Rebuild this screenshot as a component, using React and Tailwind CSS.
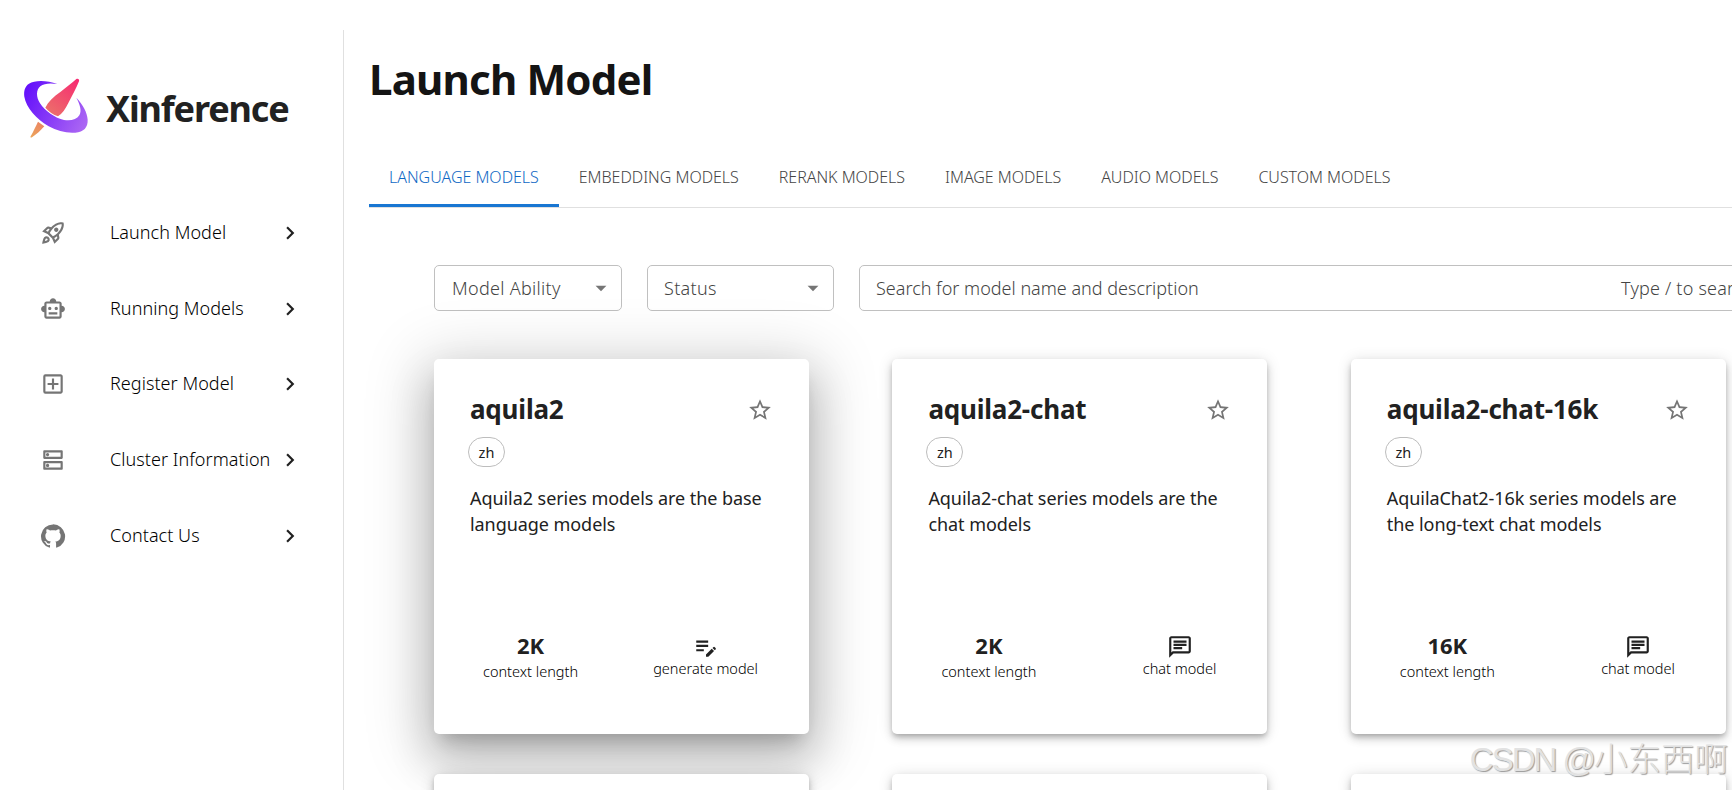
import {
  MdArrowDropDown,
  MdChevronRight,
  MdEditNote,
  MdOutlineAddBox,
  MdOutlineChat,
  MdOutlineDns,
  MdOutlineRocketLaunch,
  MdOutlineSmartToy,
  MdStarBorder,
} from "react-icons/md";

const GitHubIcon = ({ className }) => (
  <svg viewBox="0 0 24 24" fill="currentColor" className={className}>
    <path d="M12 1.27a11 11 0 00-3.48 21.46c.55.09.73-.28.73-.55v-1.84c-3.03.64-3.67-1.46-3.67-1.46-.55-1.29-1.28-1.65-1.28-1.65-.92-.65.1-.65.1-.65 1.1 0 1.73 1.1 1.73 1.1.92 1.65 2.57 1.2 3.21.92a2 2 0 01.64-1.47c-2.47-.27-5.04-1.19-5.04-5.5 0-1.1.46-2.1 1.2-2.84a3.76 3.76 0 010-2.93s.91-.28 3.11 1.1c1.8-.49 3.7-.49 5.5 0 2.1-1.38 3.02-1.1 3.02-1.1a3.76 3.76 0 01.1 2.93c.83.74 1.2 1.74 1.2 2.94 0 4.21-2.57 5.13-5.04 5.4.45.37.82.92.82 2.02v3.03c0 .27.1.64.73.55A11 11 0 0012 1.27" />
  </svg>
);

const Logo = () => (
  <svg viewBox="0 0 228 228" className="h-[76px] w-[76px] shrink-0">
    <defs>
      <linearGradient id="ring" x1="20" y1="60" x2="215" y2="160" gradientUnits="userSpaceOnUse">
        <stop offset="0" stopColor="#6410fb" />
        <stop offset="1" stopColor="#ae6af3" />
      </linearGradient>
      <linearGradient id="rocket" x1="180" y1="28" x2="40" y2="202" gradientUnits="userSpaceOnUse">
        <stop offset="0" stopColor="#f72a72" />
        <stop offset="0.6" stopColor="#ec6f6a" />
        <stop offset="1" stopColor="#eba55a" />
      </linearGradient>
    </defs>
    <path
      fill="url(#ring)"
      d="M118 42C86 30 50 30 33 41C20 49 17 64 19 80C24 112 56 148 92 169C118 184 146 190 172 188C197 186 210 172 209 149C208 127 194 103 175 83C186 104 192 122 184 136C176 149 159 153 138 150C112 145 80 122 66 100C54 81 54 60 67 49C78 40 96 39 118 42Z"
    />
    <path
      fill="url(#rocket)"
      d="M82 113C90 96 106 80 128 65C146 52 162 38 175 27C180 24 185 28 183 34C175 54 162 78 151 99C142 117 133 131 120 139C106 134 92 125 82 113Z"
    />
    <path fill="url(#rocket)" d="M60 155L79 169C68 182 56 192 42 202C39 204 36 202 38 199C46 185 52 171 60 155Z" />
  </svg>
);

const menu = [
  { label: "Launch Model", Icon: MdOutlineRocketLaunch },
  { label: "Running Models", Icon: MdOutlineSmartToy },
  { label: "Register Model", Icon: MdOutlineAddBox },
  { label: "Cluster Information", Icon: MdOutlineDns },
  { label: "Contact Us", Icon: GitHubIcon },
];

const tabs = [
  "LANGUAGE MODELS",
  "EMBEDDING MODELS",
  "RERANK MODELS",
  "IMAGE MODELS",
  "AUDIO MODELS",
  "CUSTOM MODELS",
];

const models = [
  {
    name: "aquila2",
    lang: "zh",
    description: "Aquila2 series models are the base language models",
    context: "2K",
    ability: "generate model",
    Icon: MdEditNote,
    active: true,
  },
  {
    name: "aquila2-chat",
    lang: "zh",
    description: "Aquila2-chat series models are the chat models",
    context: "2K",
    ability: "chat model",
    Icon: MdOutlineChat,
  },
  {
    name: "aquila2-chat-16k",
    lang: "zh",
    description: "AquilaChat2-16k series models are the long-text chat models",
    context: "16K",
    ability: "chat model",
    Icon: MdOutlineChat,
  },
];

const cardShadow =
  "shadow-[0_3px_5px_-1px_rgba(0,0,0,0.2),0_5px_9px_rgba(0,0,0,0.14),0_1px_15px_rgba(0,0,0,0.12)]";
const activeShadow =
  "shadow-[0_12px_16px_-8px_rgba(0,0,0,0.2),0_26px_44px_4px_rgba(0,0,0,0.16),0_10px_60px_12px_rgba(0,0,0,0.17)]";

const ModelCard = ({ model }) => (
  <div
    className={`flex h-[375px] w-[375px] flex-col rounded-[5px] bg-white pt-[33px] pr-9 pl-9 ${
      model.active ? activeShadow : cardShadow
    }`}
  >
    <div className="flex h-[35px] items-center justify-between">
      <h2 className="text-[26px] font-bold tracking-[-0.2px]">{model.name}</h2>
      <MdStarBorder className="h-[26px] w-[26px] text-[#757575]" />
    </div>
    <span className="mt-[10px] -ml-[2px] flex h-[30px] w-[37px] items-center justify-center rounded-full border border-[#bdbdbd] text-[14.5px] leading-none">
      {model.lang}
    </span>
    <p className="mt-[18px] w-[304px] text-lg leading-[26px] tracking-[-0.06px]">{model.description}</p>
    <div className="mt-auto mb-[51px] flex justify-between pr-[15px] pl-[13px] text-[14.5px] font-light">
      <div className="-mt-px flex flex-col items-center">
        <span className="text-[22px] leading-[26px] font-bold">{model.context}</span>
        <span className="mt-px leading-6 text-black">context length</span>
      </div>
      <div className="flex flex-col items-center">
        <model.Icon className="mt-px h-[26px] w-[26px]" />
        <span className="-mt-px leading-[18px] text-black">{model.ability}</span>
      </div>
    </div>
  </div>
);

const Select = ({ label, className }) => (
  <div
    className={`flex h-[46px] items-center justify-between rounded-[5px] border border-[#c0c0c0] pr-[7px] ${className}`}
  >
    <span className="tracking-[0.3px]">{label}</span>
    <MdArrowDropDown className="h-[26px] w-[26px] text-[#757575]" />
  </div>
);

const App = () => {
  return (
    <div className="relative flex h-screen w-screen overflow-hidden bg-white font-['Noto_Sans',sans-serif] text-[#212121]">
      {/* Sidebar */}
      <aside className="mt-[30px] w-[344px] shrink-0 border-r border-[#e0e0e0]">
        <div className="flex h-[165px] items-start pt-10 pl-[18px]">
          <Logo />
          <span className="ml-3 text-[36px] leading-[77px] font-bold tracking-[-1.15px]">Xinference</span>
        </div>
        <nav>
          {menu.map(({ label, Icon }) => (
            <div key={label} className="flex h-[75.75px] items-center pl-10">
              <Icon className="h-[26px] w-[26px] text-[#757575]" />
              <span className="mb-0.5 ml-11 w-[167px] text-lg font-light tracking-[0.05px] whitespace-nowrap text-black">
                {label}
              </span>
              <MdChevronRight className="h-[26px] w-[26px]" />
            </div>
          ))}
        </nav>
      </aside>

      {/* Content */}
      <main className="w-[1500px] shrink-0 pl-[25px]">
        <h1 className="mt-[50px] text-[42px] leading-[58px] font-bold tracking-[-0.8px] text-[#141414]">
          Launch Model
        </h1>

        <div className="mt-[38px] flex h-[62px] border-b border-[#e0e0e0] font-light text-[#444]">
          {tabs.map((tab, index) => (
            <div
              key={tab}
              className={`flex h-[61px] items-center border-b-3 px-5 tracking-[-0.02px] whitespace-nowrap ${
                index === 0 ? "border-[#1976d2] text-[#0f68c4]" : "border-transparent"
              }`}
            >
              <span className="mt-[3px]">{tab}</span>
            </div>
          ))}
        </div>

        <div className="mt-[57px] flex gap-[25px] pl-[65px] text-lg font-light text-[#444]">
          <Select label="Model Ability" className="w-[188px] pl-[17px]" />
          <Select label="Status" className="w-[187px] pl-4" />
          <div className="flex h-[46px] w-[980px] items-center rounded-[5px] border border-[#c0c0c0] pl-4">
            <span className="w-[745px]">Search for model name and description</span>
            <span className="tracking-[0.2px] whitespace-nowrap">Type / to search</span>
          </div>
        </div>

        <div className="mt-12 grid grid-cols-[repeat(3,375px)] gap-x-[83.4px] gap-y-10 pl-[65px]">
          {models.map((model) => (
            <ModelCard key={model.name} model={model} />
          ))}
          {models.map((model) => (
            <div key={model.name} className={`h-[375px] rounded-[5px] bg-white ${cardShadow}`} />
          ))}
        </div>
      </main>

      <div className="absolute right-1 bottom-1.5 flex items-center font-['Liberation_Sans','Noto_Sans_CJK_SC',sans-serif] text-[33px] leading-[48px] font-light whitespace-nowrap text-[#e2e2e2] [text-shadow:1px_1px_1px_#999]">
        <span className="tracking-[-2px]">CSDN @</span>
        <span className="text-[33.5px]">小东西啊</span>
      </div>
    </div>
  );
};

export default App;
